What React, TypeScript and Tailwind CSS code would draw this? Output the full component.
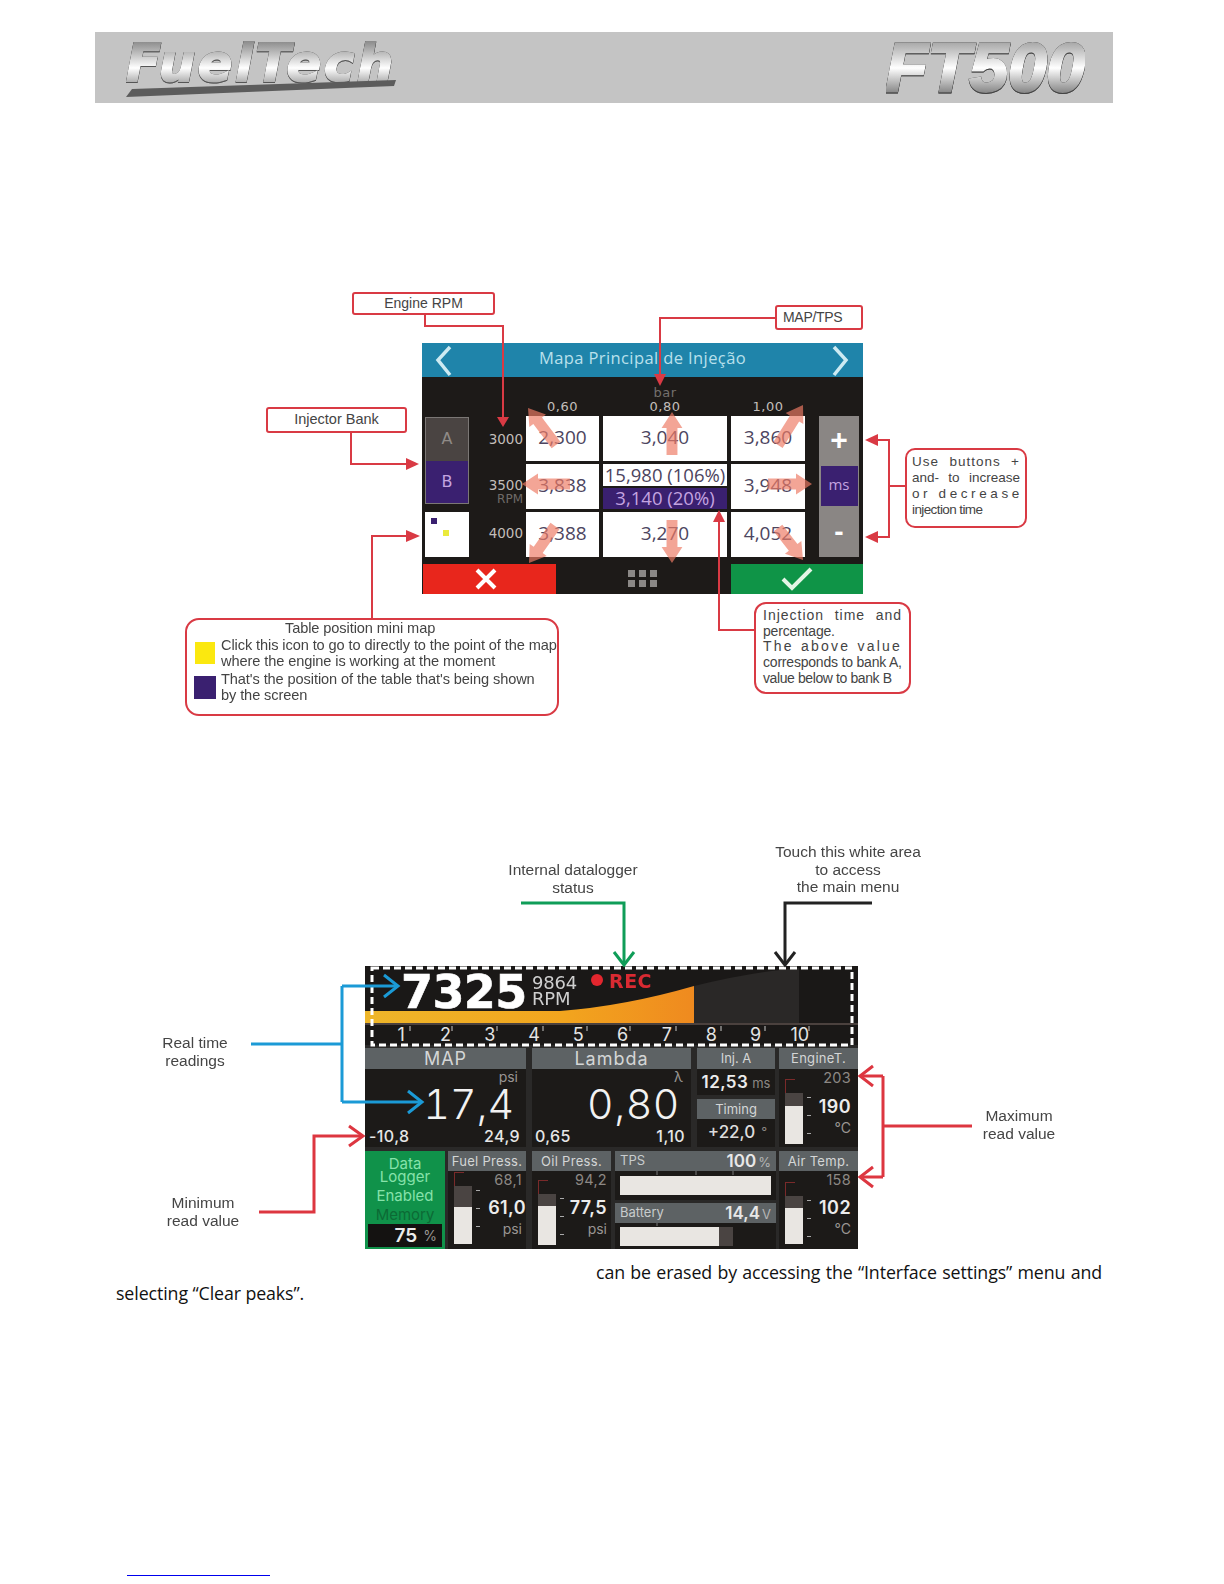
import React from "react";

const RED = "#d93a44";

function Wedge({ x1, y1, x2, y2, w = 13 }: { x1: number; y1: number; x2: number; y2: number; w?: number }) {
  const dx = x2 - x1, dy = y2 - y1;
  const l = Math.hypot(dx, dy);
  const ux = dx / l, uy = dy / l, nx = -uy, ny = ux;
  const hx = x2 - ux * 16, hy = y2 - uy * 16;
  const pts = [
    [x1 + nx * w * 0.42, y1 + ny * w * 0.42],
    [hx + nx * w * 0.42, hy + ny * w * 0.42],
    [hx + nx * w * 0.8, hy + ny * w * 0.8],
    [x2, y2],
    [hx - nx * w * 0.8, hy - ny * w * 0.8],
    [hx - nx * w * 0.42, hy - ny * w * 0.42],
    [x1 - nx * w * 0.42, y1 - ny * w * 0.42],
  ].map((p) => p.join(",")).join(" ");
  return <polygon points={pts} fill="#ee7a64" fillOpacity="0.68" />;
}

function Chevron({ d }: { d: string }) {
  return <path d={d} fill="none" stroke="#cdeaf2" strokeWidth="3.5" />;
}

function Cell({ children }: { children: React.ReactNode }) {
  return <div className="bg-white flex items-center justify-center pb-[3px] text-[19px] text-[#4d4560] font-['Open_Sans'] leading-none">{children}</div>;
}

function InjectionScreen() {
  return (
    <div className="ml-[422px] w-[441px] h-[251px] bg-[#1d1a18] flex flex-col">
      <div className="h-[34px] pb-[3px] bg-[#1f84aa] flex items-center justify-center text-[#b9e0ec] text-[16.5px] tracking-[0.4px] font-['Open_Sans']">
        Mapa Principal de Injeção
      </div>
      <div className="h-[39px] pl-[104px] grid grid-cols-[73px_124px_74px] gap-x-[4px] items-end text-center text-[#c2beba] text-[13px] tracking-[0.5px] font-['DejaVu_Sans'] leading-[16px] pb-[1px]">
        <div>0,60</div>
        <div>
          <div className="text-[#74706d] leading-[13px]">bar</div>
          0,80
        </div>
        <div>1,00</div>
      </div>
      <div className="flex h-[141px]">
        <div className="w-[47px] pl-[3px] flex flex-col shrink-0">
          <div className="mt-[1px] h-[87px] border border-[#7b7775] flex flex-col text-[16px] font-['DejaVu_Sans']">
            <div className="flex-1 bg-[#4a4442] text-[#8f8a86] flex items-center justify-center">A</div>
            <div className="flex-1 bg-[#3a2070] text-[#c4a4e0] flex items-center justify-center">B</div>
          </div>
          <div className="mt-[8px] h-[45px] bg-white relative">
            <div className="absolute left-[6px] top-[6px] w-[6px] h-[6px] bg-[#3a2070]" />
            <div className="absolute left-[18px] top-[18px] w-[6px] h-[6px] bg-[#eaea3c]" />
          </div>
        </div>
        <div className="w-[57px] pr-[3px] flex flex-col shrink-0 text-right text-[13.5px] text-[#c2beba] font-['DejaVu_Sans'] leading-[16px]">
          <div className="h-[46px] flex items-center justify-end">3000</div>
          <div className="h-[48px] flex flex-col justify-center">
            <div className="pt-[10px]">3500</div>
            <div className="text-[12px] text-[#6f6b68] leading-[13px]">RPM</div>
          </div>
          <div className="h-[45px] flex items-center justify-end">4000</div>
        </div>
        <div className="w-[279px] grid grid-cols-[73px_124px_74px] grid-rows-[45px_45px_45px] gap-x-[4px] gap-y-[3px] shrink-0">
          <Cell>2,300</Cell>
          <Cell>3,040</Cell>
          <Cell>3,860</Cell>
          <Cell>3,838</Cell>
          <div className="flex flex-col text-[18.5px] font-['Open_Sans'] leading-none">
            <div className="h-[22px] bg-white text-[#4d4560] flex items-center justify-center">15,980 (106%)</div>
            <div className="mt-[2px] h-[21px] bg-[#3a2070] text-[#c4a4e0] flex items-center justify-center">3,140 (20%)</div>
          </div>
          <Cell>3,948</Cell>
          <Cell>3,388</Cell>
          <Cell>3,270</Cell>
          <Cell>4,052</Cell>
        </div>
        <div className="ml-[14px] w-[40px] bg-[#8a8684] flex flex-col items-center shrink-0 text-white">
          <div className="h-[50px] pb-[2px] w-full flex items-center justify-center text-[30px] font-bold leading-none">+</div>
          <div className="h-[40px] w-[37px] pb-[3px] bg-[#3a2070] text-[#c4a4e0] text-[15px] font-['Open_Sans'] flex items-center justify-center">ms</div>
          <div className="flex-1 w-full flex items-center justify-center text-[28px] font-bold leading-none">-</div>
        </div>
      </div>
      <div className="mt-[7px] h-[30px] flex">
        <div className="ml-[1px] w-[133px] pr-[8px] bg-[#e8261c] flex items-center justify-center">
          <svg width="22" height="22" viewBox="0 0 22 22"><path d="M2 2L20 20M20 2L2 20" stroke="#fff" strokeWidth="4" /></svg>
        </div>
        <div className="w-[175px] pr-[2px] flex items-center justify-center">
          <svg width="32" height="20" viewBox="0 0 32 20" fill="#8b8886">
            <rect x="1" y="1" width="7" height="7" /><rect x="12" y="1" width="7" height="7" /><rect x="23" y="1" width="7" height="7" />
            <rect x="1" y="11" width="7" height="7" /><rect x="12" y="11" width="7" height="7" /><rect x="23" y="11" width="7" height="7" />
          </svg>
        </div>
        <div className="flex-1 bg-[#0f9447] flex items-center justify-center">
          <svg width="32" height="24" viewBox="0 0 32 24" fill="none"><path d="M2 12L11 21L30 2" stroke="#e4f5e6" strokeWidth="4" /></svg>
        </div>
      </div>
    </div>
  );
}

function Figure1() {
  const line = { fill: "none", stroke: RED, strokeWidth: 2 };
  return (
    <div className="relative h-[450px] shrink-0 pt-[63px] text-[#444] blur-[0.35px]">
      <InjectionScreen />
      <svg className="absolute left-0 top-0" width="1224" height="450" viewBox="0 280 1224 450">
        <Chevron d="M450 347L438 360L450 375" />
        <Chevron d="M834 347L846 360L834 375" />
        <Wedge x1={556} y1={445} x2={528} y2={408} />
        <Wedge x1={570} y1={484} x2={522} y2={484} />
        <Wedge x1={555} y1={526} x2={529} y2={563} />
        <Wedge x1={672} y1={455} x2={672} y2={412} />
        <Wedge x1={672} y1={520} x2={672} y2={563} />
        <Wedge x1={778} y1={445} x2={803} y2={405} />
        <Wedge x1={768} y1={484} x2={812} y2={484} />
        <Wedge x1={778} y1={528} x2={803} y2={560} />
        <path d="M425 315V326H503V418" {...line} />
        <polygon points="497,417 509,417 503,427" fill={RED} />
        <path d="M351 433V464H408" {...line} />
        <polygon points="406,458 406,470 419,464" fill={RED} />
        <path d="M372 618V536H408" {...line} />
        <polygon points="406,530 406,542 420,536" fill={RED} />
        <path d="M775 318H660V376" {...line} />
        <polygon points="654,374 666,374 660,386" fill={RED} />
        <path d="M905 486H889M876 440H889V537H876" {...line} />
        <polygon points="878,434 878,446 865,440" fill={RED} />
        <polygon points="878,531 878,543 865,537" fill={RED} />
        <path d="M754 630H719V520" {...line} />
        <polygon points="713,522 725,522 719,510" fill={RED} />
      </svg>
      <div className="absolute left-[352px] top-[12px] w-[143px] h-[23px] bg-white border-2 border-[#d93a44] rounded-[3px] flex items-center justify-center text-[14px]">Engine RPM</div>
      <div className="absolute left-[266px] top-[127px] w-[141px] h-[26px] bg-white border-2 border-[#d93a44] rounded-[3px] flex items-center justify-center text-[14.5px]">Injector Bank</div>
      <div className="absolute left-[775px] top-[25px] w-[88px] h-[25px] bg-white border-2 border-[#d93a44] rounded-[3px] flex items-center pl-[6px] text-[14px] tracking-[-0.3px]">MAP/TPS</div>
      <div className="absolute left-[905px] top-[168px] w-[122px] h-[80px] bg-white border-2 border-[#d93a44] rounded-[10px] px-[5px] pt-[4px] text-[13.5px] leading-[16px]">
        <div className="[text-align-last:justify] tracking-[1px]">Use buttons +</div>
        <div className="[text-align-last:justify]">and- to increase</div>
        <div className="[text-align-last:justify] tracking-[3.6px] whitespace-nowrap">or decrease</div>
        <div className="tracking-[-0.6px]">injection time</div>
      </div>
      <div className="absolute left-[754px] top-[322px] w-[157px] h-[92px] bg-white border-2 border-[#d93a44] rounded-[12px] px-[7px] pt-[4px] text-[14px] leading-[15.7px]">
        <div className="[text-align-last:justify] tracking-[1px]">Injection time and</div>
        <div className="tracking-[-0.2px]">percentage.</div>
        <div className="[text-align-last:justify] tracking-[2.2px] whitespace-nowrap">The above value</div>
        <div className="tracking-[-0.2px] whitespace-nowrap">corresponds to bank A,</div>
        <div className="tracking-[-0.4px] whitespace-nowrap">value below to bank B</div>
      </div>
      <div className="absolute left-[185px] top-[338px] w-[374px] h-[98px] bg-white border-2 border-[#d93a44] rounded-[14px] text-[14.6px] leading-[16.5px] whitespace-nowrap">
        <div className="ml-[98px] tracking-[-0.1px]">Table position mini map</div>
        <div className="flex items-center">
          <div className="ml-[8px] w-[20px] h-[22px] bg-[#fbe80f] shrink-0" />
          <div className="ml-[6px] tracking-[-0.1px]">
            <div>Click this icon to go to directly to the point of the map</div>
            <div>where the engine is working at the moment</div>
          </div>
        </div>
        <div className="flex items-center mt-[1px]">
          <div className="ml-[7px] w-[22px] h-[23px] bg-[#3a2070] shrink-0" />
          <div className="ml-[5px] tracking-[-0.1px]">
            <div>That's the position of the table that's being shown</div>
            <div>by the screen</div>
          </div>
        </div>
      </div>
    </div>
  );
}

function Head({ children, className = "" }: { children: React.ReactNode; className?: string }) {
  return <div className={`bg-[#5d6264] text-[#d4d6d6] flex items-center justify-center leading-none shrink-0 ${className}`}>{children}</div>;
}

function Gauge({ top, dark, white }: { top: number; dark: number; white: number }) {
  return (
    <div className="relative w-[18px] flex flex-col shrink-0" style={{ marginTop: top }}>
      <div className="bg-[#4a4442] shrink-0" style={{ height: dark }} />
      <div className="bg-[#e9e6e2] shrink-0" style={{ height: white }} />
      <div className="absolute left-0 top-[-14px] w-[10px] h-[14px] border-l border-t border-[#7a2a2a]" />
      <div className="absolute left-[22px] top-[4px] w-[4px] h-[1px] bg-[#aaa]" />
      <div className="absolute left-[22px] top-[22px] w-[4px] h-[1px] bg-[#aaa]" />
      <div className="absolute left-[22px] top-[40px] w-[4px] h-[1px] bg-[#aaa]" />
    </div>
  );
}

function GaugePanel(props: { title: string; max: string; value: string; unit: string; top: number; dark: number; white: number; headClass: string; padClass: string; valueClass: string }) {
  return (
    <div className="h-full bg-[#1c1a18] flex flex-col">
      <Head className={`${props.headClass} text-[13px] tracking-[0.3px]`}>{props.title}</Head>
      <div className={`flex-1 flex pl-[6px] ${props.padClass}`}>
        <Gauge top={props.top} dark={props.dark} white={props.white} />
        <div className="flex-1 flex flex-col items-end text-right">
          <div className="h-[18px] text-[14.5px] tracking-[0.3px] text-[#8c8884] leading-[18px]">{props.max}</div>
          <div className={`text-[18px] tracking-[0.4px] font-semibold text-[#ececec] leading-[20px] ${props.valueClass}`}>{props.value}</div>
          <div className="mt-[1px] text-[14px] text-[#9a9693] leading-[20px]">{props.unit}</div>
        </div>
      </div>
    </div>
  );
}

function BigPanel(props: { title: string; unit: string; value: string; min: string; max: string; padClass: string; valueClass: string }) {
  return (
    <div className="h-full bg-[#1c1a18] flex flex-col">
      <Head className="h-[21px] text-[18px] tracking-[1px]">{props.title}</Head>
      <div className={`flex-1 flex flex-col ${props.padClass} pr-[4px]`}>
        <div className="h-[16px] text-right text-[14px] text-[#9a9693] leading-[16px] pr-[4px]">{props.unit}</div>
        <div className={`text-right text-[41px] font-light tabular-nums text-[#f2f2f2] leading-[38px] ${props.valueClass}`}>{props.value}</div>
        <div className="mt-auto flex justify-between text-[16px] font-medium tracking-[0.4px] text-[#e6e6e6] leading-[22px] pr-[2px]">
          <span>{props.min}</span>
          <span>{props.max}</span>
        </div>
      </div>
    </div>
  );
}

function HBar({ label, value, unit, white, dark, padClass }: { label: string; value: string; unit: string; white: string; dark: string; padClass: string }) {
  return (
    <div className="flex flex-col">
      <div className="h-[20px] bg-[#5d6264] flex items-center justify-between px-[5px] shrink-0">
        <span className="text-[13px] text-[#c8cccc]">{label}</span>
        <span className="text-[17px] font-semibold text-[#e8e8e8] leading-none">{value}<span className="ml-[2px] text-[13px] font-normal text-[#b5b5b5]">{unit}</span></span>
      </div>
      <div className={`flex-1 bg-[#1c1a18] px-[5px] ${padClass} flex`}>
        <div className={`${white} bg-[#e9e6e2]`} />
        <div className={`${dark} bg-[#4a4442]`} />
      </div>
    </div>
  );
}

function Dashboard() {
  const nums = ["1", "2", "3", "4", "5", "6", "7", "8", "9", "10"];
  return (
    <div className="ml-[365px] w-[493px] h-[283px] bg-[#2a2928] flex flex-col font-['Inter']">
      <div className="relative h-[79px] bg-[#1a1817] shrink-0">
        <svg className="absolute inset-0" width="493" height="79" viewBox="365 966 493 79">
          <defs>
            <linearGradient id="rev" x1="0" x2="1" y1="0" y2="0">
              <stop offset="0" stopColor="#eeb62a" />
              <stop offset="0.6" stopColor="#f2a51e" />
              <stop offset="1" stopColor="#ef8a1f" />
            </linearGradient>
          </defs>
          <path d="M694 986Q750 972 799 968V1023H694Z" fill="#2a2827" />
          <path d="M365 1011H560Q625 1006 694 986V1023H365Z" fill="url(#rev)" />
          <path d="M365 1024H858" stroke="#7d6a66" strokeWidth="1" />
          <circle cx="597" cy="980" r="6" fill="#e3262e" />
          {[410, 452, 497, 543, 587, 630, 676, 721, 765, 809].map((x) => (
            <path key={x} d={`M${x} 1026V1031`} stroke="#c8c8c8" strokeWidth="1" />
          ))}
        </svg>
        <div className="absolute left-[36px] top-[-2px] text-[46px] leading-[56px] font-bold text-white font-['DejaVu_Sans'] tracking-[-0.6px] [-webkit-text-stroke:0.6px_#fff]">7325</div>
        <div className="absolute left-[167px] top-[9px] text-[18px] leading-[16px] text-[#cfcfcf] font-['DejaVu_Sans'] tracking-[-0.2px]">
          <div>9864</div>
          <div>RPM</div>
        </div>
        <div className="absolute left-[244px] top-[4px] text-[19px] leading-[22px] font-bold text-[#d92a32] font-['DejaVu_Sans'] tracking-[0.5px]">REC</div>
        <div className="absolute left-[14px] bottom-[0px] flex text-[18px] text-[#e4e4e4] leading-[20px]">
          {nums.map((n) => (
            <div key={n} className="w-[44.3px] text-center">{n}</div>
          ))}
        </div>
      </div>
      <div className="mt-[3px] h-[99px] flex shrink-0">
        <div className="w-[161px] shrink-0"><BigPanel title="MAP" unit="psi" value="17,4" min="-10,8" max="24,9" padClass="pl-[4px]" valueClass="pr-[8px]" /></div>
        <div className="ml-[6px] w-[159px] shrink-0"><BigPanel title="Lambda" unit="λ" value="0,80" min="0,65" max="1,10" padClass="pl-[3px]" valueClass="pr-[7px] tracking-[0.6px]" /></div>
        <div className="ml-[6px] w-[78px] shrink-0 flex flex-col">
          <Head className="h-[21px] text-[13px]">Inj. A</Head>
          <div className="h-[26px] bg-[#1c1a18] flex items-baseline justify-center text-[17px] tracking-[0.4px] font-semibold text-[#ececec] leading-[26px]">
            12,53<span className="ml-[4px] text-[13px] tracking-normal font-normal text-[#8c8884]">ms</span>
          </div>
          <Head className="mt-[4px] h-[20px] text-[13px]">Timing</Head>
          <div className="flex-1 bg-[#1c1a18] pl-[3px] flex items-center justify-center text-[17px] font-medium text-[#dcdcdc]">
            +22,0<span className="ml-[6px] text-[13px] font-normal text-[#8c8884]">°</span>
          </div>
        </div>
        <div className="ml-[4px] w-[79px] shrink-0">
          <GaugePanel title="EngineT." max="203" value="190" unit="°C" top={24} dark={13} white={38} headClass="h-[21px]" padClass="pr-[7px]" valueClass="mt-[10px]" />
        </div>
      </div>
      <div className="mt-[4px] h-[98px] flex shrink-0">
        <div className="w-[80px] bg-[#10924a] flex flex-col items-center text-[15px] text-[#86e2aa] leading-[13px] pt-[6px] shrink-0">
          <div>Data</div>
          <div>Logger</div>
          <div className="mt-[4px] leading-[18px]">Enabled</div>
          <div className="text-[#0c6a35] leading-[19px]">Memory</div>
          <div className="w-[74px] h-[23px] bg-[#141211] flex items-center justify-end pr-[5px] text-[19px] font-semibold text-[#ececec]">
            75<span className="ml-[6px] text-[14px] font-normal text-[#9a9693]">%</span>
          </div>
        </div>
        <div className="ml-[3px] w-[78px] shrink-0">
          <GaugePanel title="Fuel Press." max="68,1" value="61,0" unit="psi" top={15} dark={21} white={37} headClass="h-[20px]" padClass="pr-[4px]" valueClass="mt-[9px] mr-[-4px]" />
        </div>
        <div className="ml-[6px] w-[79px] shrink-0">
          <GaugePanel title="Oil Press." max="94,2" value="77,5" unit="psi" top={23} dark={12} white={39} headClass="h-[20px]" padClass="pr-[4px]" valueClass="mt-[9px]" />
        </div>
        <div className="ml-[4px] w-[161px] shrink-0 grid grid-rows-[49px_46px] gap-y-[3px]">
          <HBar label="TPS" value="100" unit="%" white="w-[151px]" dark="w-0" padClass="pt-[5px] pb-[5px]" />
          <HBar label="Battery" value="14,4" unit="V" white="w-[99px]" dark="w-[14px]" padClass="pt-[4px] pb-[3px]" />
        </div>
        <div className="ml-[3px] w-[79px] shrink-0">
          <GaugePanel title="Air Temp." max="158" value="102" unit="°C" top={25} dark={12} white={36} headClass="h-[20px]" padClass="pr-[7px]" valueClass="mt-[9px]" />
        </div>
      </div>
    </div>
  );
}

function Figure2() {
  const lbl = "absolute text-[15.5px] leading-[17.5px] text-[#454545] text-center whitespace-nowrap";
  const s = (stroke: string) => ({ fill: "none", stroke, strokeWidth: 3 });
  return (
    <div className="relative h-[420px] shrink-0 pt-[136px] blur-[0.35px]">
      <Dashboard />
      <svg className="absolute left-0 top-0" width="1224" height="420" viewBox="0 830 1224 420">
        <rect x="372" y="968" width="480" height="77" fill="none" stroke="#fff" strokeWidth="3" strokeDasharray="7 4" />
        <path d="M657 1171V1175M696 1171V1175M733 1171V1175M657 1223V1226" stroke="#777" strokeWidth="1" />
        <g {...s("#1b9ad6")}>
          <path d="M251 1044H342M342 986V1102M342 986H397M342 1102H420" />
          <path d="M384 975L398 986L384 997M408 1091L422 1102L408 1113" />
        </g>
        <g {...s("#dd3640")}>
          <path d="M259 1212H314V1136H361" />
          <path d="M349 1126L363 1136L349 1146" />
          <path d="M972 1126H883M883 1076V1177M883 1076H862M883 1177H862" />
          <path d="M873 1066L860 1076L873 1086M873 1167L860 1177L873 1187" />
        </g>
        <g {...s("#0f9d58")}>
          <path d="M521 903H624V963" />
          <path d="M614 952L624 965L634 952" />
        </g>
        <g {...s("#222")}>
          <path d="M872 903H785V963" />
          <path d="M775 952L785 965L795 952" />
        </g>
      </svg>
      <div className={`${lbl} left-[155px] top-[204px] w-[80px]`}>Real time<br />readings</div>
      <div className={`${lbl} left-[163px] top-[364px] w-[80px]`}>Minimum<br />read value</div>
      <div className={`${lbl} left-[493px] top-[31px] w-[160px]`}>Internal datalogger<br />status</div>
      <div className={`${lbl} left-[768px] top-[13px] w-[160px]`}>Touch this white area<br />to access<br />the main menu</div>
      <div className={`${lbl} left-[969px] top-[277px] w-[100px]`}>Maximum<br />read value</div>
    </div>
  );
}

export default function App() {
  return (
    <div className="w-[1224px] h-[1584px] bg-white flex flex-col font-['Liberation_Sans',sans-serif] overflow-hidden">
      <header className="mt-[32px] ml-[95px] w-[1018px] h-[71px] bg-[#c4c4c4] flex items-center justify-between relative shrink-0 blur-[0.3px]">
        <div className="relative ml-[31px]">
          <div className="font-['DejaVu_Sans'] italic font-bold text-[51px] leading-[52px] tracking-[2.8px] pb-[8px] text-transparent bg-clip-text bg-gradient-to-b from-[#7e7e7e] via-[#ffffff] to-[#5e5e5e] [-webkit-text-stroke:2px_transparent] [filter:drop-shadow(0_0_0.6px_#333)_drop-shadow(0_1px_0_#555)]">FuelTech</div>
          <svg className="absolute left-0 top-[40px]" width="272" height="20" viewBox="0 0 272 20"><polygon points="6,11 270,2 268,8 0,19" fill="#5c5c5c" /></svg>
        </div>
        <div className="mr-[28px] font-['Liberation_Sans'] italic font-bold text-[69px] leading-[70px] text-transparent bg-clip-text bg-gradient-to-b from-[#8a8a8a] via-[#ffffff] to-[#5a5a5a] [-webkit-text-stroke:3px_transparent] [filter:drop-shadow(0_0_0.6px_#222)_drop-shadow(0_1px_0_#444)]">FT500</div>
      </header>
      <div className="h-[177px] shrink-0" />
      <Figure1 />
      <div className="h-[100px] shrink-0" />
      <Figure2 />
      <p className="ml-[116px] w-[986px] mt-[12px] text-[17.8px] leading-[21px] text-[#111] text-justify indent-[480px] font-['Open_Sans'] tracking-[-0.1px] shrink-0">
        can be erased by accessing the “Interface settings” menu and selecting “Clear peaks”.
      </p>
      <div className="mt-auto mb-[8px] ml-[127px] w-[143px] h-[1px] bg-[#0000ee] shrink-0" />
    </div>
  );
}
